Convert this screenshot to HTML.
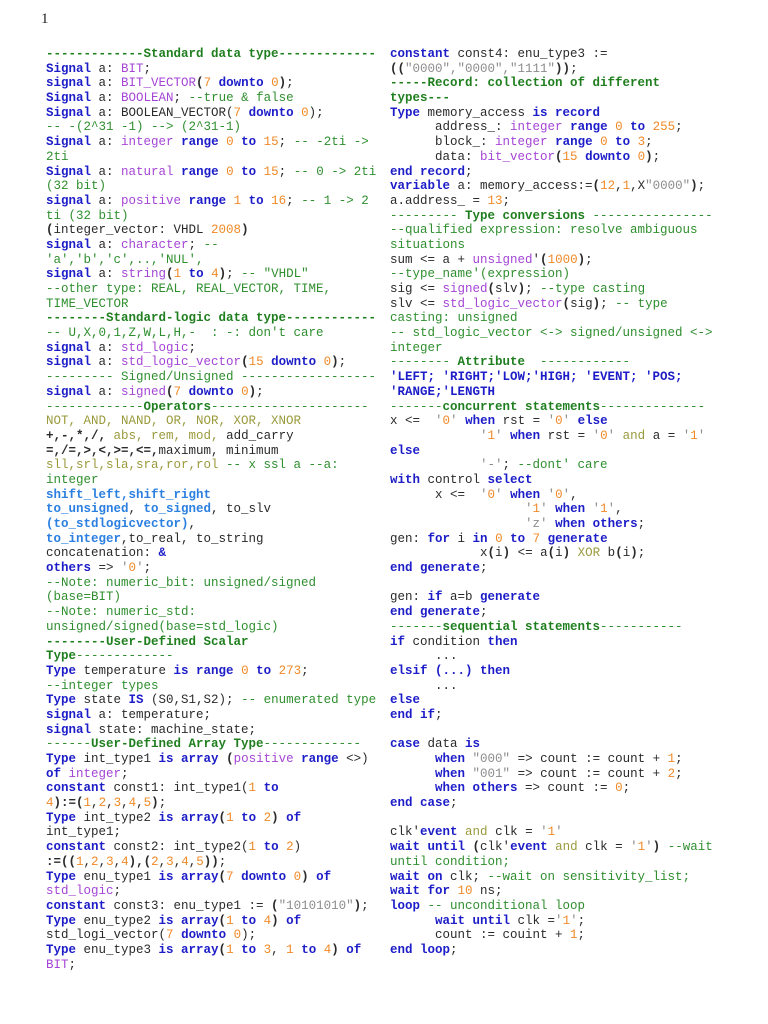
<!DOCTYPE html>
<html><head><meta charset="utf-8">
<style>
html,body{margin:0;padding:0;background:#fff;width:768px;height:1024px;overflow:hidden}
.pg{position:absolute;left:41px;top:11px;font:15px "Liberation Serif",serif;color:#222}
pre{position:absolute;top:47px;margin:0;font:12.5px/14.68px "Liberation Mono",monospace;color:#2a2a2a;white-space:pre}
#L{left:46px}#R{left:390px}
.k{color:#1c1cc8;font-weight:bold}
.t{color:#a545d6}
.n{color:#f08a28}
.c{color:#2f8f2f}
.h{color:#1f7f1f;font-weight:bold}
.s{color:#8c8c8c}
.o{color:#9a9a3c}
.b{color:#2a7fe0;font-weight:bold}
.d{font-weight:bold}
</style></head><body>
<div class="pg">1</div>
<pre id="L"><span class="h">-------------Standard data type-------------</span>
<span class="k">Signal</span> a: <span class="t">BIT</span>;
<span class="k">signal</span> a: <span class="t">BIT_VECTOR</span><span class="d">(</span><span class="n">7</span> <span class="k">downto</span> <span class="n">0</span><span class="d">)</span>;
<span class="k">Signal</span> a: <span class="t">BOOLEAN</span>; <span class="c">--true &amp; false</span>
<span class="k">Signal</span> a: BOOLEAN_VECTOR(<span class="n">7</span> <span class="k">downto</span> <span class="n">0</span>);
<span class="c">-- -(2^31 -1) --&gt; (2^31-1)</span>
<span class="k">Signal</span> a: <span class="t">integer</span> <span class="k">range</span> <span class="n">0</span> <span class="k">to</span> <span class="n">15</span>; <span class="c">-- -2ti -&gt;</span>
<span class="c">2ti</span>
<span class="k">Signal</span> a: <span class="t">natural</span> <span class="k">range</span> <span class="n">0</span> <span class="k">to</span> <span class="n">15</span>; <span class="c">-- 0 -&gt; 2ti</span>
<span class="c">(32 bit)</span>
<span class="k">signal</span> a: <span class="t">positive</span> <span class="k">range</span> <span class="n">1</span> <span class="k">to</span> <span class="n">16</span>; <span class="c">-- 1 -&gt; 2</span>
<span class="c">ti (32 bit)</span>
<span class="d">(</span>integer_vector: VHDL <span class="n">2008</span><span class="d">)</span>
<span class="k">signal</span> a: <span class="t">character</span>; <span class="c">--</span>
<span class="c">'a','b','c',..,'NUL',</span>
<span class="k">signal</span> a: <span class="t">string</span><span class="d">(</span><span class="n">1</span> <span class="k">to</span> <span class="n">4</span><span class="d">)</span>; <span class="c">-- "VHDL"</span>
<span class="c">--other type: REAL, REAL_VECTOR, TIME,</span>
<span class="c">TIME_VECTOR</span>
<span class="h">--------Standard-logic data type------------</span>
<span class="c">-- U,X,0,1,Z,W,L,H,-  : -: don't care</span>
<span class="k">signal</span> a: <span class="t">std_logic</span>;
<span class="k">signal</span> a: <span class="t">std_logic_vector</span><span class="d">(</span><span class="n">15</span> <span class="k">downto</span> <span class="n">0</span><span class="d">)</span>;
<span class="c">--------- Signed/Unsigned ------------------</span>
<span class="k">signal</span> a: <span class="t">signed</span><span class="d">(</span><span class="n">7</span> <span class="k">downto</span> <span class="n">0</span><span class="d">)</span>;
<span class="c">-------------</span><span class="h">Operators</span><span class="c">---------------------</span>
<span class="o">NOT, AND, NAND, OR, NOR, XOR, XNOR</span>
<span class="d">+,-,*,/,</span> <span class="o">abs, rem, mod,</span> add_carry
<span class="d">=,/=,&gt;,&lt;,&gt;=,&lt;=,</span>maximum, minimum
<span class="o">sll,srl,sla,sra,ror,rol</span> <span class="c">-- x ssl a --a:</span>
<span class="c">integer</span>
<span class="b">shift_left,shift_right</span>
<span class="b">to_unsigned</span>, <span class="b">to_signed</span>, to_slv
<span class="b">(to_stdlogicvector)</span>,
<span class="b">to_integer</span>,to_real, to_string
concatenation: <span class="k">&amp;</span>
<span class="k">others</span> =&gt; <span class="s">'</span><span class="n">0</span><span class="s">'</span>;
<span class="c">--Note: numeric_bit: unsigned/signed</span>
<span class="c">(base=BIT)</span>
<span class="c">--Note: numeric_std:</span>
<span class="c">unsigned/signed(base=std_logic)</span>
<span class="h">--------User-Defined Scalar</span>
<span class="h">Type</span><span class="c">-------------</span>
<span class="k">Type</span> temperature <span class="k">is range</span> <span class="n">0</span> <span class="k">to</span> <span class="n">273</span>;
<span class="c">--integer types</span>
<span class="k">Type</span> state <span class="k">IS</span> (S0,S1,S2); <span class="c">-- enumerated type</span>
<span class="k">signal</span> a: temperature;
<span class="k">signal</span> state: machine_state;
<span class="c">------</span><span class="h">User-Defined Array Type</span><span class="c">-------------</span>
<span class="k">Type</span> int_type1 <span class="k">is array</span> <span class="d">(</span><span class="t">positive</span> <span class="k">range</span> &lt;&gt;)
<span class="k">of</span> <span class="t">integer</span>;
<span class="k">constant</span> const1: int_type1(<span class="n">1</span> <span class="k">to</span>
<span class="n">4</span><span class="d">):=(</span><span class="n">1</span>,<span class="n">2</span>,<span class="n">3</span>,<span class="n">4</span>,<span class="n">5</span><span class="d">)</span>;
<span class="k">Type</span> int_type2 <span class="k">is array</span><span class="d">(</span><span class="n">1</span> <span class="k">to</span> <span class="n">2</span><span class="d">)</span> <span class="k">of</span>
int_type1;
<span class="k">constant</span> const2: int_type2(<span class="n">1</span> <span class="k">to</span> <span class="n">2</span>)
<span class="d">:=((</span><span class="n">1</span>,<span class="n">2</span>,<span class="n">3</span>,<span class="n">4</span><span class="d">),(</span><span class="n">2</span>,<span class="n">3</span>,<span class="n">4</span>,<span class="n">5</span><span class="d">))</span>;
<span class="k">Type</span> enu_type1 <span class="k">is array</span><span class="d">(</span><span class="n">7</span> <span class="k">downto</span> <span class="n">0</span><span class="d">)</span> <span class="k">of</span>
<span class="t">std_logic</span>;
<span class="k">constant</span> const3: enu_type1 := <span class="d">(</span><span class="s">"10101010"</span><span class="d">)</span>;
<span class="k">Type</span> enu_type2 <span class="k">is array</span><span class="d">(</span><span class="n">1</span> <span class="k">to</span> <span class="n">4</span><span class="d">)</span> <span class="k">of</span>
std_logi_vector(<span class="n">7</span> <span class="k">downto</span> <span class="n">0</span>);
<span class="k">Type</span> enu_type3 <span class="k">is array</span><span class="d">(</span><span class="n">1</span> <span class="k">to</span> <span class="n">3</span>, <span class="n">1</span> <span class="k">to</span> <span class="n">4</span><span class="d">)</span> <span class="k">of</span>
<span class="t">BIT</span>;</pre>
<pre id="R"><span class="k">constant</span> const4: enu_type3 :=
<span class="d">((</span><span class="s">"0000","0000","1111"</span><span class="d">))</span>;
<span class="h">-----Record: collection of different</span>
<span class="h">types---</span>
<span class="k">Type</span> memory_access <span class="k">is record</span>
      address_: <span class="t">integer</span> <span class="k">range</span> <span class="n">0</span> <span class="k">to</span> <span class="n">255</span>;
      block_: <span class="t">integer</span> <span class="k">range</span> <span class="n">0</span> <span class="k">to</span> <span class="n">3</span>;
      data: <span class="t">bit_vector</span><span class="d">(</span><span class="n">15</span> <span class="k">downto</span> <span class="n">0</span><span class="d">)</span>;
<span class="k">end record</span>;
<span class="k">variable</span> a: memory_access:=<span class="d">(</span><span class="n">12</span>,<span class="n">1</span>,X<span class="s">"0000"</span><span class="d">)</span>;
a.address_ = <span class="n">13</span>;
<span class="c">--------- </span><span class="h">Type conversions</span><span class="c"> ----------------</span>
<span class="c">--qualified expression: resolve ambiguous</span>
<span class="c">situations</span>
sum &lt;= a + <span class="t">unsigned</span>'<span class="d">(</span><span class="n">1000</span><span class="d">)</span>;
<span class="c">--type_name'(expression)</span>
sig &lt;= <span class="t">signed</span><span class="d">(</span>slv<span class="d">)</span>; <span class="c">--type casting</span>
slv &lt;= <span class="t">std_logic_vector</span><span class="d">(</span>sig<span class="d">)</span>; <span class="c">-- type</span>
<span class="c">casting: unsigned</span>
<span class="c">-- std_logic_vector &lt;-&gt; signed/unsigned &lt;-&gt;</span>
<span class="c">integer</span>
<span class="c">-------- </span><span class="h">Attribute</span><span class="c">  ------------</span>
<span class="k">'LEFT; 'RIGHT;'LOW;'HIGH; 'EVENT; 'POS;</span>
<span class="k">'RANGE;'LENGTH</span>
<span class="c">-------</span><span class="h">concurrent statements</span><span class="c">--------------</span>
x &lt;=  <span class="s">'</span><span class="n">0</span><span class="s">'</span> <span class="k">when</span> rst = <span class="s">'</span><span class="n">0</span><span class="s">'</span> <span class="k">else</span>
            <span class="s">'</span><span class="n">1</span><span class="s">'</span> <span class="k">when</span> rst = <span class="s">'</span><span class="n">0</span><span class="s">'</span> <span class="o">and</span> a = <span class="s">'</span><span class="n">1</span><span class="s">'</span>
<span class="k">else</span>
            <span class="s">'-'</span>; <span class="c">--dont' care</span>
<span class="k">with</span> control <span class="k">select</span>
      x &lt;=  <span class="s">'</span><span class="n">0</span><span class="s">'</span> <span class="k">when</span> <span class="s">'</span><span class="n">0</span><span class="s">'</span>,
                  <span class="s">'</span><span class="n">1</span><span class="s">'</span> <span class="k">when</span> <span class="s">'</span><span class="n">1</span><span class="s">'</span>,
                  <span class="s">'z'</span> <span class="k">when others</span>;
gen: <span class="k">for</span> i <span class="k">in</span> <span class="n">0</span> <span class="k">to</span> <span class="n">7</span> <span class="k">generate</span>
            x<span class="d">(</span>i<span class="d">)</span> &lt;= a<span class="d">(</span>i<span class="d">)</span> <span class="o">XOR</span> b<span class="d">(</span>i<span class="d">)</span>;
<span class="k">end generate</span>;

gen: <span class="k">if</span> a=b <span class="k">generate</span>
<span class="k">end generate</span>;
<span class="c">-------</span><span class="h">sequential statements</span><span class="c">-----------</span>
<span class="k">if</span> condition <span class="k">then</span>
      ...
<span class="k">elsif (...) then</span>
      ...
<span class="k">else</span>
<span class="k">end if</span>;

<span class="k">case</span> data <span class="k">is</span>
      <span class="k">when</span> <span class="s">"000"</span> =&gt; count := count + <span class="n">1</span>;
      <span class="k">when</span> <span class="s">"001"</span> =&gt; count := count + <span class="n">2</span>;
      <span class="k">when others</span> =&gt; count := <span class="n">0</span>;
<span class="k">end case</span>;

clk'<span class="k">event</span> <span class="o">and</span> clk = <span class="s">'</span><span class="n">1</span><span class="s">'</span>
<span class="k">wait until</span> <span class="d">(</span>clk'<span class="k">event</span> <span class="o">and</span> clk = <span class="s">'</span><span class="n">1</span><span class="s">'</span><span class="d">)</span> <span class="c">--wait</span>
<span class="c">until condition;</span>
<span class="k">wait on</span> clk; <span class="c">--wait on sensitivity_list;</span>
<span class="k">wait for</span> <span class="n">10</span> ns;
<span class="k">loop</span> <span class="c">-- unconditional loop</span>
      <span class="k">wait until</span> clk =<span class="s">'</span><span class="n">1</span><span class="s">'</span>;
      count := couint + <span class="n">1</span>;
<span class="k">end loop</span>;</pre>
</body></html>
